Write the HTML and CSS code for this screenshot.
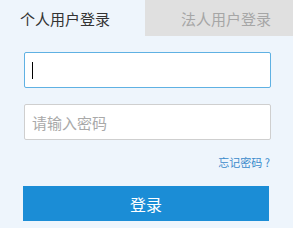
FILE: index.html
```html
<!DOCTYPE html>
<html lang="zh-CN">
<head>
  <meta charset="UTF-8" />
  <title>用户登录</title>
  <link rel="stylesheet" href="styles.css">
</head>
<body>
  <div class="login-box">
    <div class="tabs">
      <div class="tab tab-person active">个人用户登录</div>
      <div class="tab tab-corp">法人用户登录</div>
    </div>
    <form class="login-form">
      <div class="field field-focus"><span class="caret"></span></div>
      <input class="field" type="password" placeholder="请输入密码" />
      <div class="forgot"><a href="#">忘记密码 ?</a></div>
      <button class="btn-login" type="button">登录</button>
    </form>
  </div>
</body>
</html>
```

FILE: styles.css
```css
body {
  margin: 0;
  background: #eef5fc;
  font-family: "Noto Sans CJK SC", "Liberation Sans", sans-serif;
}

.login-box {
  width: 293px;
  height: 228px;
  overflow: hidden;
}

.tabs {
  display: flex;
  height: 36px;
}

.tab {
  font-size: 15px;
  line-height: 38px;
  height: 36px;
  white-space: nowrap;
}

.tab-person {
  width: 145px;
  padding-left: 20px;
  box-sizing: border-box;
  color: #333;
}

.tab-corp {
  flex: 1;
  padding-left: 36px;
  background: #e0e0e0;
  color: #a6a6a6;
}

.login-form {
  padding: 16px 22px 0 24px;
}

.field {
  display: block;
  width: 247px;
  height: 36px;
  box-sizing: border-box;
  background: #fff;
  border: 1px solid #cfcfcf;
  border-radius: 2px;
  padding: 0 7px;
  margin: 0;
  font-family: inherit;
  font-size: 15px;
  outline: none;
}

.field::placeholder {
  color: #a9a9a9;
}

.field-focus {
  border-color: #5fb1e3;
  margin-bottom: 16px;
  display: flex;
  align-items: center;
}

.caret {
  width: 1px;
  height: 17px;
  background: #000;
}

.forgot {
  width: 246px;
  text-align: right;
  margin-top: 14px;
  font-size: 11px;
  line-height: 16px;
}

.forgot a {
  color: #3a8acb;
  text-decoration: none;
}

.btn-login {
  display: block;
  margin: 16px 0 0 -1px;
  width: 246px;
  height: 35px;
  border: none;
  background: #1b8dd6;
  color: #fff;
  font-family: inherit;
  font-size: 16px;
  padding: 0;
}
```
